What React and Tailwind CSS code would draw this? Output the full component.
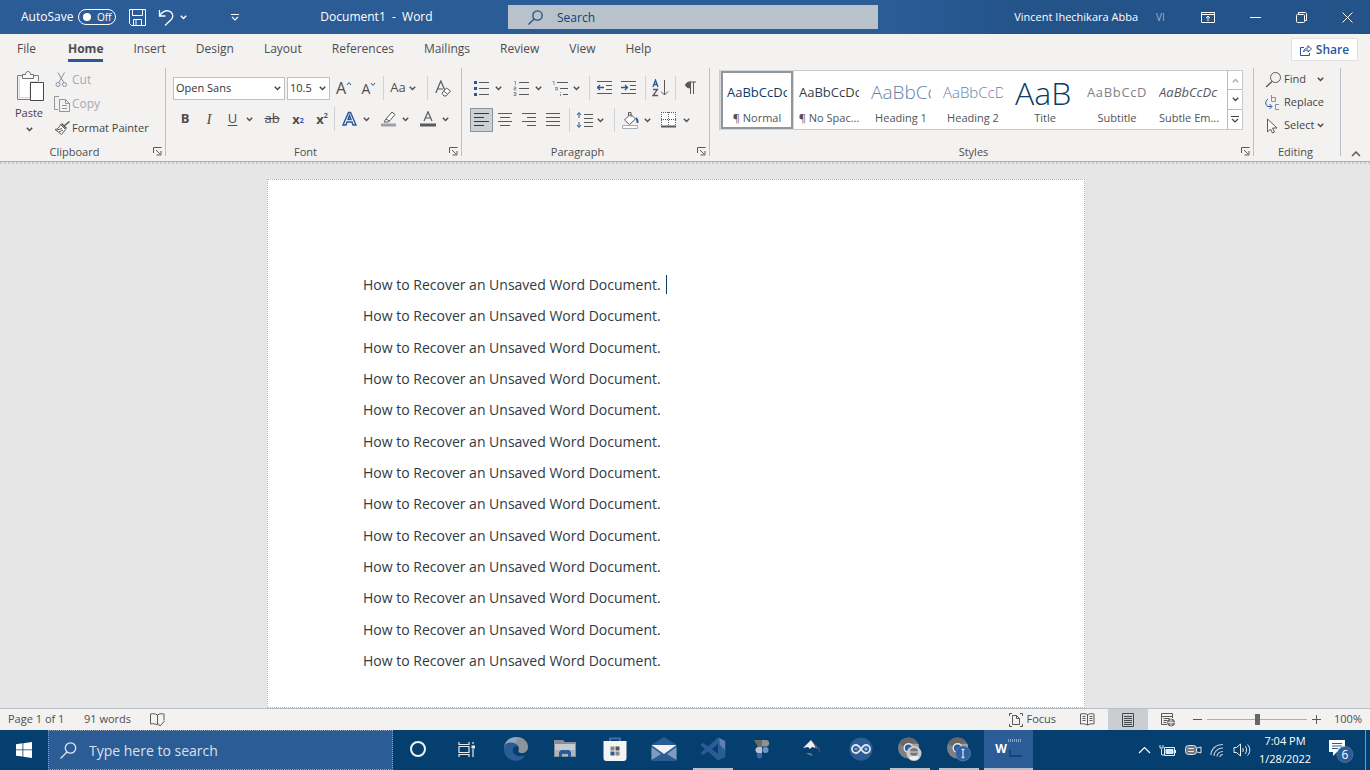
import React from "react";

const styles = [
  { label: "¶ Normal", sample: "AaBbCcDc", look: "text-[13px] text-[#0b3c66] font-medium", on: true },
  { label: "¶ No Spac...", sample: "AaBbCcDc", look: "text-[13px] text-[#333f4a] font-medium" },
  { label: "Heading 1", sample: "AaBbCc", look: "text-[19px] text-[#5f7fa8] font-light" },
  { label: "Heading 2", sample: "AaBbCcD", look: "text-[15px] text-[#5f7fa8] font-light" },
  { label: "Title", sample: "AaB", look: "text-[32px] text-[#0b3c66] font-light" },
  { label: "Subtitle", sample: "AaBbCcD", look: "text-[13px] text-[#7d8288] tracking-wider" },
  { label: "Subtle Em...", sample: "AaBbCcDc", look: "text-[13px] text-[#555b61] italic" },
];

const tabs = ["File", "Home", "Insert", "Design", "Layout", "References", "Mailings", "Review", "View", "Help"];
const lines = Array.from({ length: 13 }, () => "How to Recover an Unsaved Word Document.");

function Chevron({ className = "" }) {
  return (
    <svg width="7" height="5" viewBox="0 0 7 5" fill="none" stroke="currentColor" strokeWidth="1.4" className={"shrink-0 " + className}>
      <path d="M.8.8 3.5 3.5 6.2.8" />
    </svg>
  );
}

function Glyph({ w = 16, h = 16, children, className = "" }) {
  return (
    <svg width={w} height={h} viewBox={`0 0 ${w} ${h}`} fill="none" stroke="#595959" className={"shrink-0 " + className}>
      {children}
    </svg>
  );
}

function Tool({ label, className, children }) {
  return (
    <button type="button" aria-label={label} className={"flex h-6 shrink-0 items-center justify-center text-[#4d4d4d] " + className}>
      {children}
    </button>
  );
}

function Sep({ className = "" }) {
  return <span className={"h-6 w-px shrink-0 bg-[#d0d3d6] " + className} />;
}

function Launcher({ label }) {
  return (
    <button type="button" aria-label={label}>
      <Glyph w={9} h={9}>
        <path d="M.5 6V.5H8.500M3 3l4 4M8 4v4H3.500" />
      </Glyph>
    </button>
  );
}

function Group({ name, className, launcher = true, children }) {
  return (
    <section aria-label={name} className={"mb-[5px] flex flex-col border-r border-[#b9c0c8] " + className}>
      <div className="h-[69px] shrink-0">{children}</div>
      <div className="flex h-[19px] items-end pr-[3px] text-[11px] leading-[8px] text-[#4d4d4d]">
        <span className={"flex-1 text-center " + (launcher ? "pr-1" : "")}>{name}</span>
        {launcher && <Launcher label={name + " settings"} />}
      </div>
    </section>
  );
}

function Combo({ label, value, className }) {
  return (
    <div className={"grid h-[23px] items-center border border-[#b9c0c8] bg-white " + className}>
      <select aria-label={label} className="col-start-1 row-start-1 h-[21px] w-full appearance-none bg-transparent pl-[2px] text-[11px] text-[#333] outline-none">
        <option>{value}</option>
      </select>
      <Chevron className="pointer-events-none col-start-1 row-start-1 mr-[3px] justify-self-end text-[#444]" />
    </div>
  );
}

function TitleBar() {
  return (
    <header className="grid h-[34px] shrink-0 grid-cols-[508fr_370fr_492fr] bg-linear-to-r from-[#2b5c96] from-65% to-[#235389] to-75% text-white">
      <div className="flex items-center pl-[21px] text-[12px]">
        <span className="w-[57px] whitespace-nowrap text-[12px]">AutoSave</span>
        <button type="button" role="switch" aria-checked="false" aria-label="AutoSave" className="flex h-4 w-[38px] items-center gap-[6px] rounded-full border border-white pl-1 text-[10px] leading-none">
          <span className="size-2 rounded-full bg-white" />
          Off
        </button>
        <button type="button" aria-label="Save" className="ml-[13px]">
          <svg width="17" height="17" viewBox="0 0 17 17" fill="none" stroke="white">
            <path d="M.5.5h16v16H2.500l-2-2zM3.500.5v6h10v-6M4.500 16.500v-6h8v6M7 11v5" />
          </svg>
        </button>
        <button type="button" aria-label="Undo" className="ml-[12px] flex items-center gap-[6px]">
          <svg width="16" height="17" viewBox="0 0 16 17" fill="none" stroke="white" strokeWidth="1.300">
            <path d="M1.500 1v6h6M1.500 7C4 3 7 1.500 10 1.800c5 .6 6 6 3 9L7 16.500" />
          </svg>
          <Chevron />
        </button>
        <button type="button" aria-label="Customize toolbar" className="ml-[44px]">
          <svg width="8" height="7" viewBox="0 0 8 7" fill="none" stroke="white">
            <path d="M0 .5h8M1 3l3 3 3-3" strokeWidth="1.200" />
          </svg>
        </button>
        <span className="flex-1 whitespace-pre pl-[6px] text-center">Document1  -  Word</span>
      </div>
      <div className="my-[5px] flex items-center gap-[14px] bg-[#b9c1cb] pl-5 text-[#0b4478]">
        <svg width="15" height="15" viewBox="0 0 15 15" fill="none" stroke="#1d5088" strokeWidth="1.300">
          <circle cx="9.500" cy="5.500" r="4.700" />
          <path d="M6 9 .5 14.500" />
        </svg>
        <input aria-label="Search" placeholder="Search" className="h-5 min-w-0 flex-1 bg-transparent text-[12px] outline-none placeholder:text-[#0b4478]" />
      </div>
      <div className="flex items-center justify-end">
        <span className="text-[11px]">Vincent Ihechikara Abba</span>
        <span className="ml-[18px] w-[45px] text-[10px] text-[#9db2cc]">VI</span>
        <button type="button" aria-label="Ribbon display options">
          <svg width="14" height="11" viewBox="0 0 14 11" fill="none" stroke="white">
            <path d="M.5.5h13v10H.5zM.5 2.500h13M7 9V4M5 6l2-2 2 2" />
          </svg>
        </button>
        <button type="button" aria-label="Minimize" className="flex w-[46px] justify-end">
          <svg width="11" height="11" viewBox="0 0 11 11" stroke="white"><path d="M0 5.500h11" /></svg>
        </button>
        <button type="button" aria-label="Restore" className="flex w-[46px] justify-end">
          <svg width="11" height="11" viewBox="0 0 11 11" fill="none" stroke="white">
            <rect x=".5" y="2.500" width="8" height="8" rx="1" />
            <path d="M2.500 2V.5h7l1 1v7H9" />
          </svg>
        </button>
        <button type="button" aria-label="Close" className="mr-[17px] flex w-[46px] justify-end">
          <svg width="11" height="11" viewBox="0 0 11 11" stroke="white"><path d="m.5.500 10 10m0-10-10 10" /></svg>
        </button>
      </div>
    </header>
  );
}

function TabRow() {
  return (
    <nav className="flex h-[34px] shrink-0 items-center pb-[3px] pl-[17px] pr-[12px] text-[12px] text-[#4d4d4d]">
      {tabs.map((t) => (
        <a
          key={t}
          href="#"
          aria-current={t === "Home" ? "page" : undefined}
          className={
            "mr-[30px] border-b-[3px] pb-px pt-[3px] leading-[18px] " +
            (t === "Home" ? "border-[#2b579a] font-bold" : t === "File" ? "border-transparent pr-[2px]" : "border-transparent")
          }
        >
          {t}
        </a>
      ))}
      <button type="button" className="ml-auto flex h-[23px] w-[67px] items-center justify-center gap-1 border border-[#e1e1e1] bg-white text-[12px] font-semibold text-[#2b579a]">
        <svg width="12" height="12" viewBox="0 0 12 12" fill="none" stroke="#2b579a">
          <path d="M4 3.500H.5v8h9V9M3.500 8C4 5 6 4 8 4V1.500l3.500 3.500L8 8V6C6 6 4.500 6.500 3.500 8z" />
        </svg>
        Share
      </button>
    </nav>
  );
}

function Clipboard() {
  return (
    <Group name="Clipboard" className="w-[166px]">
      <div className="flex h-full pl-[13px]">
        <button type="button" className="flex w-8 flex-col items-center justify-start pt-[3px] text-[11px] text-[#444]">
          <Glyph w={28} h={31} className="ml-1">
            <path d="M7 4.500H.5V28.500H13" stroke="#7c8085" />
            <path d="M2.500 6.500v20H13v-16h8V7" fill="#fff" stroke="#d8dadc" />
            <path d="M15 4.500h6.500V10" stroke="#7c8085" />
            <path d="M5.500 7.500v-4h3c0-4 5-4 5 0h3v4z" fill="#f8f8f8" stroke="#6d7176" />
            <path d="M13.500 11.500h13v18h-13z" fill="#fff" stroke="#44484c" />
          </Glyph>
          <span className="mt-[2px] leading-[18px]">Paste</span>
          <Chevron className="mt-[5px]" />
        </button>
        <div className="ml-[9px] flex flex-col text-[12px]">
          <button type="button" className="flex h-6 shrink-0 items-center text-[#a3abb4]">
            <Glyph w={18} h={16}>
              <path d="m4 .5 6 10.500M10.500.5 4.500 11" stroke="#8593a3" />
              <circle cx="4" cy="12.500" r="2" stroke="#8593a3" />
              <circle cx="10.500" cy="12.500" r="2" stroke="#8593a3" />
            </Glyph>
            Cut
          </button>
          <button type="button" className="flex h-6 shrink-0 items-center text-[#a3abb4]">
            <Glyph w={18} h={16}>
              <path d="M5 .5H.5v13H4M5.500 3.500h6l4 4v8h-10zM11.500 3.500v4h4M8 9.500h5M8 12.500h5" stroke="#8d959d" />
            </Glyph>
            Copy
          </button>
          <button type="button" className="flex h-6 shrink-0 items-center whitespace-nowrap text-[11px] text-[#444]">
            <Glyph w={18} h={16}>
              <path d="M15.500 1.500 10 6M7.500 3.500l5 5" strokeWidth="1.600" />
              <path d="m6.500 4.500 5 5-4 5-6.500-5c3 0 4-2 5.500-5z" fill="#fff" />
              <path d="m3 10 5-1.500M5 12l4-2" />
            </Glyph>
            Format Painter
          </button>
        </div>
      </div>
    </Group>
  );
}

function FontGroup() {
  return (
    <Group name="Font" className="w-[296px]">
      <div className="flex flex-col gap-[7px] pl-[7px] pt-2">
        <div className="flex h-6 items-center">
          <Combo label="Font" value="Open Sans" className="w-[112px]" />
          <Combo label="Font size" value="10.5" className="ml-[2px] w-[43px]" />
          <Tool label="Grow font" className="ml-[4px] w-5 text-[16px]">A<Glyph w={6} h={14}><path d="m1 4 2-2.500L5 4" stroke="#2b579a" /></Glyph></Tool>
          <Tool label="Shrink font" className="ml-[5px] w-5 text-[14px]">A<Glyph w={6} h={14}><path d="m1 2 2 2.500L5 2" stroke="#2b579a" /></Glyph></Tool>
          <Sep className="ml-1" />
          <Tool label="Change case" className="ml-[2px] w-[34px] gap-[3px] text-[13px]">Aa<Chevron /></Tool>
          <Sep className="ml-[7px]" />
          <Tool label="Clear formatting" className="ml-[5px] w-5">
            <Glyph w={16} h={17}>
              <path d="m.8 13 5-12 4 9M2.500 9H8" strokeWidth="1.200" />
              <path d="m7 13 4.500-5 4 3-4.500 5H9z" fill="#fff" />
              <path d="m8.500 11 4 3" />
            </Glyph>
          </Tool>
        </div>
        <div className="flex h-6 items-center">
          <Tool label="Bold" className="w-6 text-[13px] font-bold">B</Tool>
          <Tool label="Italic" className="w-6 font-['Liberation_Serif',serif] text-[15px] italic">I</Tool>
          <Tool label="Underline" className="ml-[2px] w-[35px] gap-[9px] text-[13px]"><span className="underline underline-offset-2">U</span><Chevron /></Tool>
          <Tool label="Strikethrough" className="w-[28px] text-[13px]"><span className="line-through">ab</span></Tool>
          <Tool label="Subscript" className="w-6 text-[13px] font-bold leading-none">x<sub className="text-[7px] text-[#2b579a]">2</sub></Tool>
          <Tool label="Superscript" className="w-6 text-[13px] font-bold leading-none">x<sup className="text-[7px] text-[#2b579a]">2</sup></Tool>
          <Sep />
          <Tool label="Text effects" className="ml-1 w-[34px] gap-[6px]">
            <Glyph w={15} h={16}>
              <path d="M1 14 6.500 1.500h2L14 14h-3l-1-3H5l-1 3zM6 8.500h3L7.500 4.500z" fill="#fff" stroke="#2b579a" strokeWidth="1.500" />
            </Glyph>
            <Chevron />
          </Tool>
          <Tool label="Highlight" className="ml-[5px] w-[34px] gap-[5px]">
            <Glyph w={16} h={16}>
              <path d="m5 8 6-7 3 2.500L8.500 10zM5 8l-2 3h4l1.500-1" fill="#fff" />
              <path d="M0 14h15" stroke="#9aa1a8" strokeWidth="3" />
            </Glyph>
            <Chevron />
          </Tool>
          <Tool label="Font color" className="ml-[5px] w-[34px] gap-[6px]">
            <Glyph w={16} h={16}>
              <path d="M4 10 8 .8 12 10M5.500 7h5" strokeWidth="1.200" />
              <path d="M0 14h16" strokeWidth="3" />
            </Glyph>
            <Chevron />
          </Tool>
        </div>
      </div>
    </Group>
  );
}

function ParagraphGroup() {
  return (
    <Group name="Paragraph" className="w-[248px]">
      <div className="flex flex-col gap-[8px] pl-2 pt-2">
        <div className="flex h-6 items-center">
          <Tool label="Bullets" className="w-[34px] gap-[6px]">
            <Glyph><path d="M6 2.500h10M6 8.500h10M6 14.500h10" /><path d="M1 2.500h3M1 8.500h3M1 14.500h3" stroke="#2b579a" strokeWidth="3" /></Glyph>
            <Chevron />
          </Tool>
          <Tool label="Numbering" className="ml-[6px] w-[34px] gap-[6px]">
            <Glyph>
              <path d="M6 2.500h10M6 8.500h10M6 14.500h10" />
              <path d="M1 1.500h1.500V5M.5 7h2.500v1.500H1V10h2.500M.5 12.500h2.500v3H.5M1 14h2" stroke="#8a96a5" />
            </Glyph>
            <Chevron />
          </Tool>
          <Tool label="Multilevel list" className="ml-[5px] w-[34px] gap-[5px]">
            <Glyph>
              <path d="M5 2.500h11M8 8.500h8M11 14.500h5" />
              <path d="M.5 1.500H2V5M3 7.500h2.500V10H3.500V9H5M8.500 12v1M8.500 14v2" stroke="#8a96a5" />
            </Glyph>
            <Chevron />
          </Tool>
          <Sep className="ml-[6px]" />
          <Tool label="Decrease indent" className="ml-[3px] w-6">
            <Glyph><path d="M0 1.500h15M9 5.500h6M9 9.500h6M0 13.500h15" /><path d="M0 7.500h7M3 5 .5 7.500 3 10" stroke="#2b579a" strokeWidth="1.300" /></Glyph>
          </Tool>
          <Tool label="Increase indent" className="w-6">
            <Glyph><path d="M0 1.500h15M9 5.500h6M9 9.500h6M0 13.500h15" /><path d="M0 7.500h6M4 5l2.500 2.500L4 10" stroke="#2b579a" strokeWidth="1.300" /></Glyph>
          </Tool>
          <Sep className="ml-[4px]" />
          <Tool label="Sort" className="ml-[2px] w-6">
            <Glyph w={17} h={18}>
              <path d="m1 8 2.500-7L6 8M2 5.500h3" stroke="#2b579a" strokeWidth="1.300" />
              <path d="M1 10.500h4.500L1 16.500h5" strokeWidth="1.300" />
              <path d="M12.500 1v15M9 12.500l3.500 3.500 3.500-3.500" />
            </Glyph>
          </Tool>
          <Sep className="ml-[3px]" />
          <Tool label="Show formatting marks" className="ml-[4px] w-5">
            <Glyph w={11} h={14}><path d="M5.500 1v12M8.500 1v12M4 1h7" /><path d="M5.500 1v6C-1 7-1 1 5.500 1z" fill="#595959" /></Glyph>
          </Tool>
        </div>
        <div className="flex h-6 items-center">
          <Tool label="Align left" className="w-[23px] border border-[#8b9299] bg-[#ccd1d6]"><Glyph><path d="M0 1.500h15M0 5.500h10M0 9.500h15M0 13.500h10" stroke="#33383d" /></Glyph></Tool>
          <Tool label="Center" className="w-6"><Glyph><path d="M1 1.500h14M3 5.500h10M1 9.500h14M3 13.500h10" /></Glyph></Tool>
          <Tool label="Align right" className="w-6"><Glyph><path d="M1 1.500h14M6 5.500h9M1 9.500h14M6 13.500h9" /></Glyph></Tool>
          <Tool label="Justify" className="w-6"><Glyph><path d="M1 1.500h14M1 5.500h14M1 9.500h14M1 13.500h14" /></Glyph></Tool>
          <Sep className="ml-1" />
          <Tool label="Line spacing" className="ml-[2px] w-[36px] gap-[4px]">
            <Glyph w={17}><path d="M8 2.500h9M8 6.500h9M8 10.500h9M8 14.500h9" /><path d="M3 1v5M1 3l2-2.500L5 3M3 10v5M1 13l2 2.500L5 13" stroke="#2b579a" /></Glyph>
            <Chevron />
          </Tool>
          <Sep className="ml-[6px]" />
          <Tool label="Shading" className="ml-[4px] w-[34px] gap-[5px]">
            <Glyph w={17} h={17}>
              <path d="m2.500 8 6-6 5 5-6 5.500zM6.500 4V.5H9V5" fill="#fff" />
              <path d="M14 6c2 2 1.500 4 1.500 5" stroke="#2b579a" strokeWidth="1.800" />
              <path d="M.5 13.500h15v3H.5z" fill="#fff" stroke="#a5adb5" />
            </Glyph>
            <Chevron />
          </Tool>
          <Tool label="Borders" className="ml-[5px] w-[34px] gap-[6px]">
            <Glyph>
              <path d="M0 0h15v15H0z" fill="#fff" stroke="none" />
              <path d="M.5 0v15M14.500 0v15M0 .5h15M7.500 0v15M0 7.500h15" strokeDasharray="1 1" />
              <path d="M0 14.500h15" strokeWidth="2" />
            </Glyph>
            <Chevron />
          </Tool>
        </div>
      </div>
    </Group>
  );
}

function StylesGroup() {
  return (
    <Group name="Styles" className="min-w-[520px] flex-1">
      <div className="flex pl-[9px] pr-[10px] pt-[2px]">
        <div className="flex h-[60px] flex-1 border border-[#c6cbd0] bg-white pl-px">
          {styles.map((s) => (
            <button
              key={s.label}
              type="button"
              aria-pressed={!!s.on}
              className={"flex w-[72px] flex-col items-center border-2 px-1 pt-px " + (s.on ? "border-[#8f969e] bg-white outline outline-[#d3d7da]" : "border-transparent")}
            >
              <span className={"flex h-[35px] w-[60px] items-center overflow-hidden whitespace-nowrap pt-[2px] leading-none " + s.look}>{s.sample}</span>
              <span className="whitespace-nowrap text-[11px] leading-[18px] text-[#4f5459]">{s.label}</span>
            </button>
          ))}
          <div className="ml-auto grid w-[15px] grid-rows-3 divide-y divide-[#b5bcc4] border-l border-[#b5bcc4] text-[#444]">
            <button type="button" aria-label="Previous styles" className="flex items-center justify-center text-[#a9b0b8]"><Chevron className="rotate-180" /></button>
            <button type="button" aria-label="Next styles" className="flex items-center justify-center"><Chevron /></button>
            <button type="button" aria-label="All styles" className="flex items-center justify-center">
              <svg width="8" height="7" viewBox="0 0 8 7" fill="none" stroke="currentColor"><path d="M0 .5h8M1 3l3 3 3-3" strokeWidth="1.200" /></svg>
            </button>
          </div>
        </div>
      </div>
    </Group>
  );
}

function EditingGroup() {
  const row = "flex h-[23px] items-center text-left text-[#444]";
  return (
    <Group name="Editing" className="w-[87px]" launcher={false}>
      <div className="flex flex-col pl-[11px] text-[11px]">
        <button type="button" className={row}>
          <Glyph w={19}><circle cx="10.500" cy="5.500" r="5" /><path d="M7 9.500 1 15" strokeWidth="1.300" /></Glyph>
          Find<Chevron className="ml-[11px]" />
        </button>
        <button type="button" className={row}>
          <Glyph w={19}>
            <path d="M6.500 0v6.500h4v-4h-4M14 9.500h-3.500v5H14" stroke="#7f93ad" />
            <path d="M3 4C0 6 0 10 3 11.500h3.500M4.500 9 7 11.500 4.500 14" stroke="#2b579a" />
          </Glyph>
          Replace
        </button>
        <button type="button" className={row}>
          <Glyph w={19}><path d="M2.500 1v13l3-3 2 4 2-1-2-4H12z" fill="#fff" /></Glyph>
          Select<Chevron className="ml-[3px]" />
        </button>
      </div>
    </Group>
  );
}

function StatusBar() {
  return (
    <footer className="flex h-[22px] shrink-0 items-center border-t border-[#b9c0c8] bg-[#f3f2f1] px-2 text-[11px] text-[#4d4d4d]">
      <span className="w-[76px]">Page 1 of 1</span>
      <span>91 words</span>
      <button type="button" aria-label="Proofing" className="ml-[19px]">
        <Glyph w={15} h={14}><path d="M7.500 11.500V2C5 .5 3 .5.5 1v10c2.500-.5 4.500-.5 7 1 M7.500 2C10 .5 12 .5 14 1v6.500M7.500 10l2.500 3 4.500-5" /></Glyph>
      </button>
      <button type="button" className="ml-auto flex items-center gap-[3px]">
        <Glyph w={14} h={14}>
          <path d="M3 .5H.5V3M11 .5h2.500V3M.5 11v2.500H3M13.500 11v2.500H11M3.500 2.500h4l3 3v6h-7zM7.500 2.500v3h3" />
        </Glyph>
        Focus
      </button>
      <button type="button" aria-label="Read mode" className="ml-[13px] mr-[3px] flex h-full w-[36px] items-center justify-center">
        <Glyph w={15} h={13}><path d="M7.500 12V1.500C5 .5 3 .5.5 1v10c3-.5 5 0 7 1 2-1 4-1.500 6.500-1V1C12 .5 10 .5 7.500 1.500M2.500 3.500h3M2.500 5.500h3M2.500 7.500h3M9.500 3.500h3M9.500 5.500h3M9.500 7.500h3" /></Glyph>
      </button>
      <button type="button" aria-label="Print layout" className="flex h-full w-10 items-center justify-center bg-[#c9ced3]">
        <Glyph w={13} h={14}><path d="M.5.500h11v13H.5zM2 3.500h8M2 5.500h8M2 7.500h8M2 9.500h8M2 11.500h8" stroke="#44484c" /></Glyph>
      </button>
      <button type="button" aria-label="Web layout" className="flex h-full w-10 items-center justify-center">
        <Glyph w={15} h={14}>
          <path d="M6 11.500H.5V.5h11V5M.5 3.500h11M2.500 5.500h6M2.500 7.500h4M2.500 9.500h3" />
          <circle cx="10" cy="9.500" r="3.500" fill="#888" />
          <path d="M6.500 9.500h7M10 6v7" stroke="#ddd" />
        </Glyph>
      </button>
      <button type="button" aria-label="Zoom out" className="ml-[5px]"><Glyph w={9} h={9}><path d="M0 4.500h9" /></Glyph></button>
      <input
        type="range"
        aria-label="Zoom"
        defaultValue="50"
        className="mx-[5px] h-3 w-[100px] appearance-none bg-transparent [&::-webkit-slider-runnable-track]:h-px [&::-webkit-slider-runnable-track]:bg-[#a8afb6] [&::-webkit-slider-thumb]:-mt-[5px] [&::-webkit-slider-thumb]:h-[11px] [&::-webkit-slider-thumb]:w-[5px] [&::-webkit-slider-thumb]:appearance-none [&::-webkit-slider-thumb]:bg-[#666]"
      />
      <button type="button" aria-label="Zoom in"><Glyph w={9} h={9}><path d="M0 4.500h9M4.500 0v9" /></Glyph></button>
      <span className="ml-[13px]">100%</span>
    </footer>
  );
}

const Chrome = ({ badge }) => (
  <svg width="28" height="28" viewBox="0 0 28 28">
    <circle cx="12.500" cy="13" r="10.500" fill="#7d7f82" />
    <path d="M3 8.500a10.500 10.500 0 0 1 19 0h-9.500a5 5 0 0 0-4.500 3z" fill="#6a6866" />
    <path d="M22.500 9c2 6-2 12-8 14.500l3-8c1-2 0-5-2-6.500z" fill="#a0a2a4" />
    <circle cx="12.500" cy="13" r="5" fill="#e8eaec" />
    <circle cx="12.500" cy="13" r="3.600" fill="#2b5c96" />
    {badge === "person" ? (
      <g>
        <circle cx="18" cy="18.500" r="7.500" fill="#c9cbcd" />
        <circle cx="18" cy="17" r="4" fill="#777" />
        <path d="M13 23c1-3 9-3 10 0-3 3-7 3-10 0z" fill="#eee" />
        <path d="M14 17h8" stroke="#ddd" />
      </g>
    ) : (
      <g>
        <circle cx="18" cy="18.500" r="7.500" fill="#2f62a0" stroke="#7390b5" strokeWidth=".6" />
        <path d="M18 14.500v8M16.500 14.500h3M16.500 22.500h3" stroke="#d5dbe3" strokeWidth="1.300" />
      </g>
    )}
  </svg>
);

const apps = [
  { name: "Cortana", icon: <svg width="18" height="18" viewBox="0 0 18 18"><circle cx="9" cy="9" r="7" fill="none" stroke="#f2f2f2" strokeWidth="2" /></svg> },
  {
    name: "Task view",
    icon: (
      <svg width="18" height="17" viewBox="0 0 18 17" fill="none" stroke="#e6eaee" strokeWidth="1.200">
        <path d="M1 1v2.500h10V1M1 5.500h10v6H1zM1 16v-2.500h10V16M15 1v2M15 8v8" />
        <path d="M13.500 6h3.500" strokeWidth="3" />
      </svg>
    ),
  },
  {
    name: "Edge",
    icon: (
      <svg width="26" height="26" viewBox="0 0 26 26">
        <path d="M1 13C1 5 7 1 13 1c8 0 12 5 12 10 0 4-3 6-6 6-3 0-4-1-3.500-2.500C17 11 14 8 11 8c-5 0-7 3-10 5z" fill="#8e9498" />
        <path d="M2 9C5 2 11 0 17 2c-3 1-5 3-5 6-5-1-8 1-10 1z" fill="#8fa6c4" />
        <path d="M1 13c0-5 4-7 8-6.500 3 .5 5 2 6 4-4-1-6 2-5 5 1 4 6 6 12 4-3 5-8 6-12 5C4 23 1 18 1 13z" fill="#2b5c96" />
      </svg>
    ),
  },
  {
    name: "File Explorer",
    icon: (
      <svg width="24" height="22" viewBox="0 0 24 22">
        <path d="M1 2h9l2 2h11v15H1z" fill="#8a8e92" />
        <path d="M2 6h20v6H2z" fill="#c3cbd4" />
        <path d="M2 12h20v6H2z" fill="#a9b5c3" />
        <path d="M6 19v-5l2-2h8l2 2v5h-3v-3H9v3z" fill="#2b5c96" />
      </svg>
    ),
  },
  {
    name: "Microsoft Store",
    icon: (
      <svg width="24" height="26" viewBox="0 0 24 26">
        <path d="M7 6V2.500h10V6" fill="none" stroke="#3b6fae" strokeWidth="2" />
        <path d="M.5 5h23v17a3 3 0 0 1-3 3h-17a3 3 0 0 1-3-3z" fill="#f4f4f4" />
        <path d="M7.500 10.500h4v4h-4zM12.500 15.500h4v4h-4z" fill="#888" />
        <path d="M12.500 10.500h4v4h-4z" fill="#555" />
        <path d="M7.500 15.500h4v4h-4z" fill="#2b5c96" />
      </svg>
    ),
  },
  {
    name: "Mail",
    icon: (
      <svg width="26" height="26" viewBox="0 0 26 26">
        <path d="M.5 9 13 1l12.500 8v16H.5z" fill="#2b5c96" />
        <path d="M.5 9h25L13 18z" fill="#f2f2f2" />
        <path d="M.5 11 10 18 .5 24zM25.500 11 16 18l9.500 6z" fill="#7e9cc0" />
      </svg>
    ),
  },
  {
    name: "Visual Studio Code",
    running: true,
    icon: (
      <svg width="26" height="26" viewBox="0 0 26 26">
        <path d="M18 1.500 25.500 5v16L18 24.500 8 15.500 3 19l-2.500-2L5 13 .5 9 3 7l5 3.500zM18 8l-6 5 6 5z" fill="#2b5c96" fillRule="evenodd" />
        <path d="m19 2 6 3v9l-5-5z" fill="#5d82b2" />
      </svg>
    ),
  },
  {
    name: "Figma",
    icon: (
      <svg width="22" height="22" viewBox="0 0 22 22">
        <path d="M3 2h8v7H7z" fill="#6d6a68" />
        <path d="M11 2h5a3.500 3.500 0 0 1 0 6.500h-5z" fill="#8d9297" />
        <path d="M7 9h4v6H8a3 3 0 0 1-1-6z" fill="#b9c3cf" />
        <circle cx="14.500" cy="12" r="3" fill="#6d94c5" />
        <path d="M6 15h5v3a2.500 2.500 0 0 1-5 0z" fill="#3569a8" />
      </svg>
    ),
  },
  {
    name: "Inkscape",
    icon: (
      <svg width="20" height="20" viewBox="0 0 20 20">
        <path d="M10 1 2 9l5-1 2 2 2-2 4 1-2-4z" fill="#eceeef" />
        <path d="m10 1 8 8-3 1-2-5z" fill="#5b6064" />
        <path d="M5 14h5l2 3-4-1z" fill="#77706a" />
        <path d="m16 8 3 3-1 2" fill="none" stroke="#2f69ab" />
      </svg>
    ),
  },
  {
    name: "Arduino",
    icon: (
      <svg width="24" height="24" viewBox="0 0 24 24">
        <circle cx="12" cy="12" r="11.500" fill="#2b5c96" />
        <path d="M12 12c-2-3-3-4-5-4a4 4 0 0 0 0 8c2 0 3-1 5-4s3-4 5-4a4 4 0 0 1 0 8c-2 0-3-1-5-4z" fill="none" stroke="#dfe4ea" strokeWidth="1.800" />
        <path d="M5.500 12h3M15.500 12h3M17 10.500v3" stroke="#dfe4ea" />
      </svg>
    ),
  },
  { name: "Chrome, first profile", running: true, icon: <Chrome badge="person" /> },
  { name: "Chrome, second profile", running: true, icon: <Chrome badge="letter" /> },
  {
    name: "Word",
    active: true,
    icon: (
      <span className="flex items-center text-[12px] font-bold text-white">
        W
        <svg width="15" height="22" viewBox="0 0 15 22"><path d="M1 2.500h14" stroke="#8aa5c8" strokeWidth="3" strokeDasharray="1 1" /><path d="M3 12v6h12" fill="none" stroke="#0b4074" strokeWidth="1.500" /></svg>
      </span>
    ),
  },
];

function Taskbar() {
  return (
    <div className="flex h-10 shrink-0 bg-[#053f70] text-white">
      <button type="button" aria-label="Start" className="flex w-12 items-center justify-center">
        <svg width="16" height="16" viewBox="0 0 16 16" fill="#fff"><path d="M0 2.200 6.500 1.300v6.200H0zM7.300 1.200 16 0v7.500H7.300zM0 8.300h6.500v6.300L0 13.700zM7.300 8.300H16V16l-8.700-1.200z" /></svg>
      </button>
      <div className="flex w-[345px] items-center gap-3 border border-dotted border-[#8b9bb0] bg-[#2b5c96] pl-[11px]">
        <svg width="17" height="17" viewBox="0 0 17 17" fill="none" stroke="#e3e8ee" strokeWidth="1.300"><circle cx="10.500" cy="6" r="5.200" /><path d="M7 10 .5 16.500" /></svg>
        <input aria-label="Type here to search" placeholder="Type here to search" className="h-6 min-w-0 flex-1 bg-transparent text-[14px] outline-none placeholder:text-[#dbe1e8]" />
      </div>
      <div className="flex flex-1">
        {apps.map((a) => (
          <button
            key={a.name}
            type="button"
            aria-label={a.name}
            className={"flex flex-1 flex-col items-center " + (a.active ? "bg-[#2b5c96]" : "")}
          >
            <span className="flex flex-1 items-center">{a.icon}</span>
            <span className={"h-[2px] " + (a.active ? "w-full bg-[#b9c1cb]" : a.running ? "w-10 bg-[#b9c1cb]" : "w-10")} />
          </button>
        ))}
      </div>
      <div className="ml-[105px] flex items-center gap-2 text-[11px]">
        <button type="button" aria-label="Show hidden icons">
          <svg width="13" height="8" viewBox="0 0 13 8" fill="none" stroke="#fff" strokeWidth="1.200"><path d="m1 7 5.500-5.500L12 7" /></svg>
        </button>
        <svg width="18" height="13" viewBox="0 0 18 13" fill="none" stroke="#eef1f4"><path d="M5.500 3.500h10v8h-10zM16.500 6v3M2.500 5v6M1 1v3h3V1M3 11h2" /><path d="M7 5.500h7v4H7z" fill="#dde3ea" /></svg>
        <svg width="17" height="12" viewBox="0 0 17 12" fill="none" stroke="#dde3ea"><rect x=".5" y="1.500" width="11" height="9" rx="3" fill="#777" /><path d="M3 4.500h6M3 7.500h6M12 4l4-1v6l-4-1" /></svg>
        <svg width="15" height="15" viewBox="0 0 15 15" fill="none" stroke="#c5cedb" strokeWidth="1.100"><path d="M1 12C1 6 6 1.500 13 1.500M4 13c0-4.500 3.500-8 9-8M7 13.500c0-3 2.500-5 6-5M10 14c0-1.500 1-2.500 3-2.500" /></svg>
        <svg width="18" height="14" viewBox="0 0 18 14" fill="none" stroke="#eef1f4"><path d="M1 4.500h2.500L7.500 1v12L3.500 9.500H1zM9.500 5c1 1 1 3 0 4M12 3c2 2 2 6 0 8M14.500 1.500c3 3 3 8 0 11" /></svg>
        <div className="w-[52px] text-center leading-[18px]">
          <div>7:04 PM</div>
          <div>1/28/2022</div>
        </div>
        <button type="button" aria-label="6 notifications" className="ml-[9px] mr-[3px]">
          <svg width="26" height="26" viewBox="0 0 26 26">
            <path d="M1 3h16v12H9l-4 4v-4H1z" fill="#fff" />
            <path d="M4 6.500h10M4 9h10M4 11.500h6" stroke="#2b5c96" />
            <circle cx="17" cy="17.500" r="8" fill="#2b5c96" stroke="#7390b5" strokeWidth=".5" />
            <text x="17" y="22" textAnchor="middle" fontSize="12" fill="#fff">6</text>
          </svg>
        </button>
        <span className="mr-1 h-10 w-px bg-[#7f94ad]" />
      </div>
    </div>
  );
}

export default function App() {
  return (
    <div className="flex h-screen flex-col overflow-hidden bg-[#f3f2f1] font-['Open_Sans','Noto_Sans',sans-serif]">
      <TitleBar />
      <TabRow />
      <div className="flex h-[94px] shrink-0 border-b border-[#aab2bb]">
        <Clipboard />
        <FontGroup />
        <ParagraphGroup />
        <StylesGroup />
        <EditingGroup />
        <button type="button" aria-label="Collapse ribbon" className="flex w-[29px] items-end justify-center pb-[4px]">
          <Glyph w={10} h={7}><path d="M1 6l4-4 4 4" strokeWidth="1.500" /></Glyph>
        </button>
      </div>
      <main className="flex min-h-0 flex-1 justify-center overflow-hidden border-t-2 border-dotted border-[#c9ced3] bg-[#e6e6e6] pr-[18px] pt-[15px]">
        <article className="w-[818px] border border-dotted border-[#b5b5b5] bg-white px-[95px] pt-[89px]">
          <div className="grid h-[407px] auto-rows-fr text-[14px] text-[#2f3a45]">
            {lines.map((line, i) => (
              <p key={i} className="flex items-center">
                {line}
                {i === 0 && <span className="ml-[5px] h-[19px] w-px bg-[#0b3c66]" />}
              </p>
            ))}
          </div>
        </article>
      </main>
      <StatusBar />
      <Taskbar />
    </div>
  );
}
